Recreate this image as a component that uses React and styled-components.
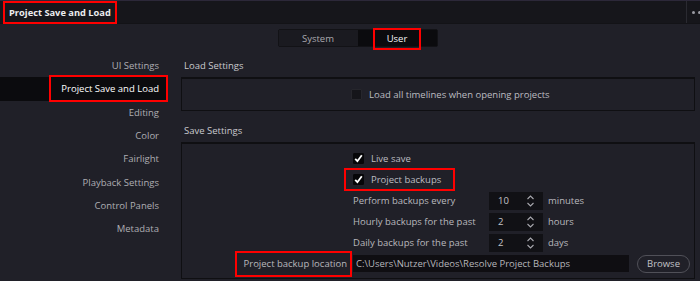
import React from "react";
import styled, { createGlobalStyle } from "styled-components";

const GlobalStyle = createGlobalStyle`
  html, body {
    margin: 0;
    padding: 0;
    background: #202028;
  }
  body {
    font-family: "Open Sans", "Noto Sans", sans-serif;
    font-size: 9.5px;
    color: #b4b4b9;
  }
  * { box-sizing: border-box; }
`;

const navItems = [
  "UI Settings",
  "Project Save and Load",
  "Editing",
  "Color",
  "Fairlight",
  "Playback Settings",
  "Control Panels",
  "Metadata",
];

const spinRows = [
  { label: "Perform backups every", value: "10", unit: "minutes" },
  { label: "Hourly backups for the past", value: "2", unit: "hours" },
  { label: "Daily backups for the past", value: "2", unit: "days" },
];

function CheckIcon() {
  return (
    <svg width="9" height="9" viewBox="0 0 9 9">
      <polyline points="1.2,4.8 3.4,7.2 7.8,1.2" fill="none" stroke="#fff" strokeWidth="1.8" />
    </svg>
  );
}

function Chevrons() {
  return (
    <svg width="9" height="14" viewBox="0 0 9 14">
      <polyline points="1.5,5 4.5,2 7.5,5" fill="none" stroke="#a8a8ae" strokeWidth="1.1" />
      <polyline points="1.5,9 4.5,12 7.5,9" fill="none" stroke="#a8a8ae" strokeWidth="1.1" />
    </svg>
  );
}

function Check({ checked, label }) {
  return (
    <CheckRow>
      <Box $checked={checked}>{checked && <CheckIcon />}</Box>
      <span>{label}</span>
    </CheckRow>
  );
}

export default function App() {
  return (
    <Window>
      <GlobalStyle />
      <Header>
        <Mark $pad="3px 4px 3px 4px">
          <HeaderTitle>Project Save and Load</HeaderTitle>
        </Mark>
        <HeaderEnd>
          <Dots>
            <i />
            <i />
          </Dots>
        </HeaderEnd>
      </Header>

      <TabsRow>
        <TabGroup>
          <Tab>System</Tab>
          <Tab $active>
            <Mark $pad="2px 12px 3px">User</Mark>
          </Tab>
        </TabGroup>
      </TabsRow>

      <Body>
        <Sidebar>
          {navItems.map((item) => {
            const active = item === "Project Save and Load";
            return (
              <NavItem key={item} $active={active}>
                {active ? <Mark $pad="5px 7px 5px 10px">{item}</Mark> : item}
              </NavItem>
            );
          })}
        </Sidebar>

        <Content>
          <SectionTitle>Load Settings</SectionTitle>
          <LoadPanel>
            <Check checked={false} label="Load all timelines when opening projects" />
          </LoadPanel>

          <SectionTitle $spaced>Save Settings</SectionTitle>
          <SavePanel>
            <Field>
              <Check checked label="Live save" />
            </Field>
            <Field>
              <Mark $pad="3px 12px 3px 7px">
                <Check checked label="Project backups" />
              </Mark>
            </Field>
            {spinRows.map((row) => (
              <Field key={row.label}>
                <SpinRow>
                  <span>{row.label}</span>
                  <Spin>
                    <span>{row.value}</span>
                    <Chevrons />
                  </Spin>
                  <span>{row.unit}</span>
                </SpinRow>
              </Field>
            ))}
            <Label>
              <Mark $pad="4px 3px 5px 7px">Project backup location</Mark>
            </Label>
            <PathRow>
              <PathInput>C:\Users\Nutzer\Videos\Resolve Project Backups</PathInput>
              <Browse>Browse</Browse>
            </PathRow>
          </SavePanel>
        </Content>
      </Body>
    </Window>
  );
}

const Window = styled.div`
  width: 700px;
  height: 281px;
  overflow: hidden;
  display: flex;
  flex-direction: column;
  background: #202028;
`;

const Mark = styled.span`
  display: inline-flex;
  align-items: center;
  padding: ${(p) => p.$pad};
  margin: ${(p) =>
    p.$pad
      .split(" ")
      .map((v) => "-" + v)
      .join(" ")};
  outline: 2px solid #ff0000;
`;

const Header = styled.div`
  height: 24px;
  flex-shrink: 0;
  display: flex;
  align-items: center;
  padding-left: 9px;
  background: #16161b;
  border-top: 1px solid #2c2839;
  border-bottom: 1px solid #131317;
`;

const HeaderTitle = styled.span`
  font-weight: 700;
  font-size: 9.3px;
  color: #ececef;
`;

const HeaderEnd = styled.div`
  margin-left: auto;
  align-self: stretch;
  width: 14px;
  border-left: 1px solid #2a2a31;
  display: flex;
  align-items: center;
  padding-left: 5px;
`;

const Dots = styled.div`
  display: flex;
  gap: 3px;

  i {
    width: 3px;
    height: 3px;
    border-radius: 50%;
    background: #9a9aa2;
  }
`;

const TabsRow = styled.div`
  display: flex;
  justify-content: center;
  padding: 5px 0 0 15px;
`;

const TabGroup = styled.div`
  display: flex;
  height: 18px;
  border-radius: 2px;
  background: #0d0d10;
  border: 1px solid #121216;
`;

const Tab = styled.div`
  width: 79px;
  display: flex;
  align-items: center;
  justify-content: center;
  color: ${(p) => (p.$active ? "#f4f4f6" : "#a9a9ae")};
  background: ${(p) => (p.$active ? "#0b0b0e" : "#1a1a20")};
`;

const Body = styled.div`
  display: grid;
  grid-template-columns: 168px 1fr;
  column-gap: 13px;
  padding-top: 7px;
  flex: 1;
`;

const Sidebar = styled.div`
  display: flex;
  flex-direction: column;
`;

const NavItem = styled.div`
  height: 23.3px;
  display: flex;
  align-items: center;
  justify-content: flex-end;
  padding-right: 9px;
  color: ${(p) => (p.$active ? "#ffffff" : "#aeaeb3")};
  background: ${(p) => (p.$active ? "#0b0b0e" : "transparent")};
`;

const Content = styled.div`
  display: flex;
  flex-direction: column;
  padding-right: 5px;
`;

const SectionTitle = styled.div`
  height: 23px;
  display: flex;
  align-items: center;
  padding-left: 3px;
  margin-top: ${(p) => (p.$spaced ? "8px" : "0")};
  color: #c9c9ce;
`;

const Panel = styled.div`
  border: 1px solid #0f0f12;
  border-top-width: 2px;
  background: #202028;
`;

const LoadPanel = styled(Panel)`
  height: 34px;
  display: flex;
  align-items: center;
  padding-left: 169px;
`;

const SavePanel = styled(Panel)`
  height: 137px;
  padding: 4px 0 5px;
  display: grid;
  grid-template-columns: 165px 1fr;
  grid-auto-rows: 21px;
  column-gap: 6px;
`;

const Field = styled.div`
  grid-column: 2;
  display: flex;
  align-items: center;
`;

const Label = styled.div`
  grid-column: 1;
  display: flex;
  align-items: center;
  justify-content: flex-end;
  color: #b8b8bd;
`;

const CheckRow = styled.label`
  display: flex;
  align-items: center;
  gap: 7px;
  color: #bcbcc1;
`;

const Box = styled.span`
  width: 11px;
  height: 11px;
  display: flex;
  align-items: center;
  justify-content: center;
  border-radius: 1px;
  background: ${(p) => (p.$checked ? "#060608" : "#15151a")};
  border: 1px solid ${(p) => (p.$checked ? "#060608" : "#26262c")};
`;

const SpinRow = styled.div`
  display: grid;
  grid-template-columns: 131px 54px auto;
  column-gap: 5px;
  align-items: center;
  color: #b8b8bd;
`;

const Spin = styled.div`
  height: 18px;
  display: flex;
  align-items: center;
  justify-content: space-between;
  padding: 0 8px 0 9px;
  background: #111115;
  color: #c4c4c8;
`;

const PathRow = styled.div`
  grid-column: 2;
  display: flex;
  align-items: center;
  gap: 8px;
`;

const PathInput = styled.div`
  width: 276px;
  height: 17px;
  display: flex;
  align-items: center;
  padding-left: 3px;
  background: #0f0e12;
  color: #b6b6bb;
  white-space: nowrap;
`;

const Browse = styled.button`
  width: 53px;
  height: 18px;
  padding: 0;
  border: 1px solid #505058;
  border-radius: 9px;
  background: transparent;
  color: #c2c2c7;
  font-family: inherit;
  font-size: 9.5px;
`;
